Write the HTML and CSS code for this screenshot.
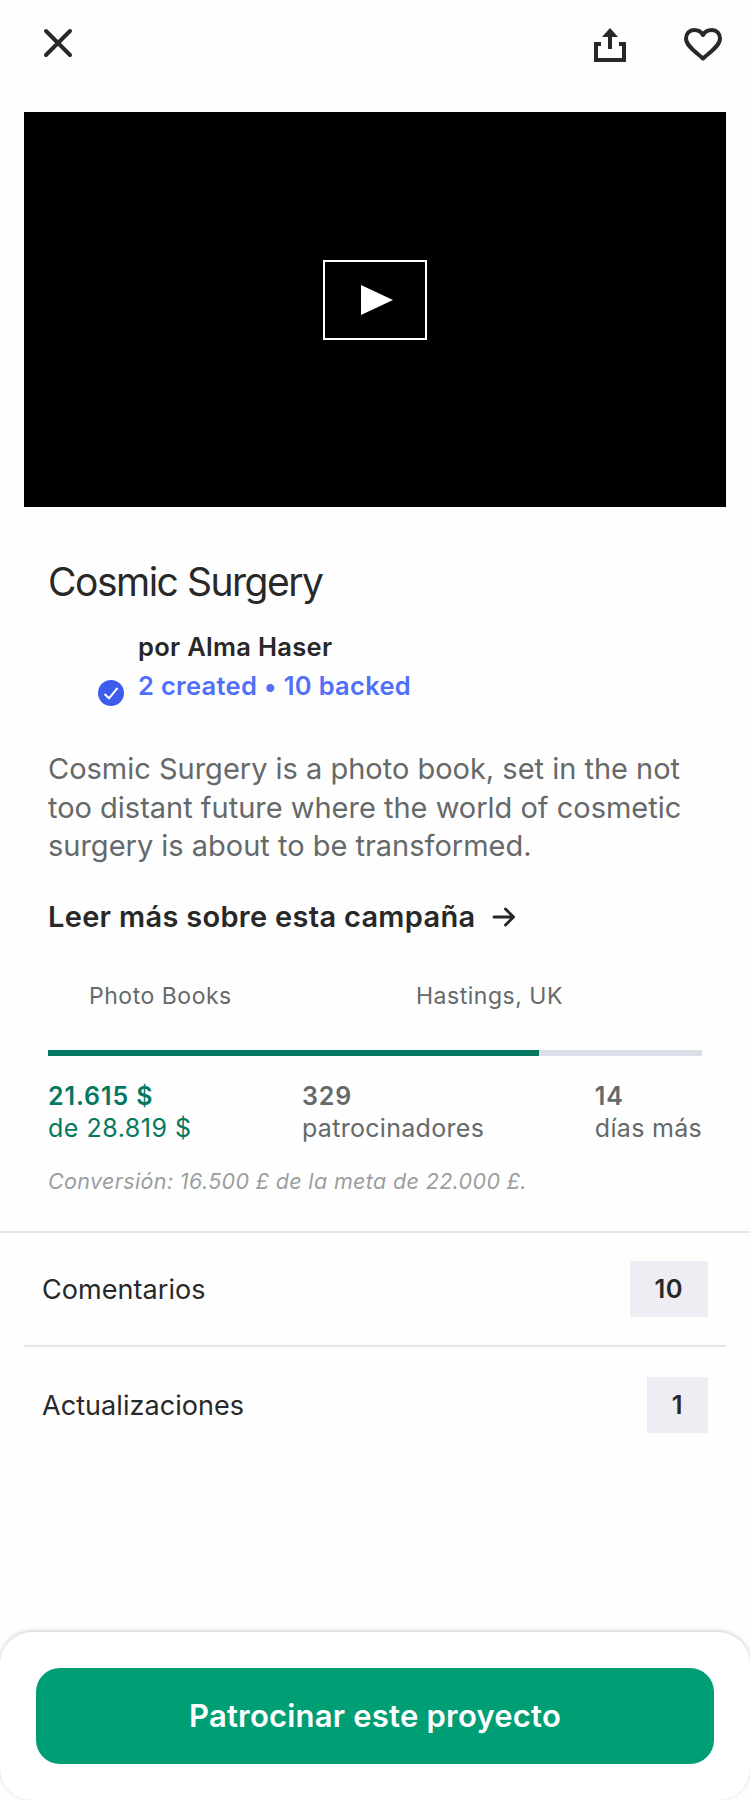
FILE: index.html
```html
<!DOCTYPE html>
<html lang="es">
<head>
<meta charset="utf-8">
<title>Cosmic Surgery</title>
<link rel="stylesheet" href="styles.css">
</head>
<body>
<div class="screen">
  <header class="topbar">
    <svg class="icon-close" width="32" height="32" viewBox="0 0 32 32" aria-label="Cerrar"><path d="M4 4 28 28M28 4 4 28"/></svg>
    <div class="actions">
      <svg class="icon-share" width="34" height="38" viewBox="0 0 34 38" aria-label="Compartir"><path class="tray" d="M8 18H3V34H31V18H26"/><path class="arrow" d="M17 2 25 11H19V23H15V11H9Z"/></svg>
      <svg class="icon-heart" width="40" height="36" viewBox="0 0 40 36" aria-label="Guardar"><path d="M20 32.500C14.500 27 3 20.500 3 12.500C3 7.500 6.500 4 11 4C15 4 18.500 6 20 9C21.500 6 25 4 29 4C33.500 4 37 7.500 37 12.500C37 20.500 25.500 27 20 32.500Z"/></svg>
    </div>
  </header>

  <div class="video">
    <div class="play"><svg width="32" height="30" viewBox="0 0 32 30"><path d="M0 0 32 15 0 30Z"/></svg></div>
  </div>

  <main class="project">
    <h1 class="title">Cosmic Surgery</h1>
    <div class="creator">
      <div class="avatar">
        <svg class="verified" width="26" height="26" viewBox="0 0 26 26"><circle cx="13" cy="13" r="13"/><path d="M6.500 14 11 18.300 19.500 8"/></svg>
      </div>
      <div class="creator-info">
        <div class="name">por Alma Haser</div>
        <div class="history">2 created • 10 backed</div>
      </div>
    </div>
    <p class="blurb">Cosmic Surgery is a photo book, set in the not<br>too distant future where the world of cosmetic<br>surgery is about to be transformed.</p>
    <a class="more"><span>Leer más sobre esta campaña</span><svg width="24" height="22" viewBox="0 0 24 22"><path d="M2 11H21M13.500 3 21.500 11 13.500 19"/></svg></a>
    <div class="tags"><span>Photo Books</span><span>Hastings, UK</span></div>
    <div class="progress"><div class="progress-fill" style="width:75%"></div></div>
    <div class="stats">
      <div class="stat pledged"><b>21.615 $</b><span>de 28.819 $</span></div>
      <div class="stat backers"><b>329</b><span>patrocinadores</span></div>
      <div class="stat days"><b>14</b><span>días más</span></div>
    </div>
    <p class="conversion">Conversión: 16.500 £ de la meta de 22.000 £.</p>
  </main>

  <nav class="links">
    <a class="row"><span>Comentarios</span><b class="count">10</b></a>
    <hr class="divider">
    <a class="row"><span>Actualizaciones</span><b class="count">1</b></a>
  </nav>

  <footer class="cta"><button class="pledge">Patrocinar este proyecto</button></footer>
</div>
</body>
</html>
```
FILE: styles.css
```css
* { box-sizing: border-box; }
body { margin: 0; background: #fefefe; color: #282828; font-family: Inter, "Liberation Sans", sans-serif; }
h1, p { margin: 0; font-weight: 400; }
b { font-weight: 600; }
svg { display: block; flex: none; }
.screen { display: flex; flex-direction: column; width: 750px; height: 1800px; overflow: hidden; white-space: nowrap; }

.topbar { display: flex; justify-content: space-between; align-items: flex-start; height: 112px; padding: 26px 27px 0 42px; }
.topbar svg { fill: none; stroke: #282828; stroke-width: 4; }
.icon-close { margin-top: 1px; stroke-linecap: round; }
.topbar .arrow { fill: #282828; stroke: none; }
.topbar .icon-heart { stroke-linejoin: round; }
.actions { display: flex; gap: 56px; }

.video { display: flex; align-items: center; justify-content: center; height: 395px; margin: 0 24px; padding-bottom: 19px; background: #000; }
.play { display: flex; align-items: center; height: 80px; width: 104px; padding-left: 36px; border: 2px solid #fff; }
.play svg { fill: #fff; }

.project { display: flex; flex-direction: column; height: 724px; padding: 51px 48px 0; }
.title { font-size: 39px; line-height: 48px; letter-spacing: -1.49px; }
.creator { display: flex; gap: 14px; height: 74px; margin-top: 26px; }
.avatar { display: flex; align-items: flex-end; justify-content: flex-end; width: 76px; }
.verified circle { fill: #3c5ceb; }
.verified path { fill: none; stroke: #fff; stroke-width: 2; }
.creator-info { display: flex; flex-direction: column; gap: 9px; font-size: 25.5px; line-height: 30px; font-weight: 600; letter-spacing: 0.3px; }
.history { color: #5070fa; }
.blurb { height: 115px; margin-top: 44px; font-size: 29px; line-height: 38.5px; letter-spacing: -0.01px; color: #656969; }
.more { display: flex; align-items: center; gap: 17px; height: 40px; margin-top: 31px; font-size: 29px; font-weight: 600; letter-spacing: 0.3px; }
.more svg { margin-top: 1px; fill: none; stroke: #282828; stroke-width: 3; stroke-linecap: round; stroke-linejoin: round; }
.tags { display: grid; grid-template-columns: 327px 1fr; margin-top: 45px; padding-left: 41px; font-size: 23px; line-height: 30px; letter-spacing: 0.52px; color: #656969; }
.progress { height: 6px; margin-top: 39px; background: #dcdee8; }
.progress-fill { height: 6px; background: #047860; }
.stats { display: flex; justify-content: space-between; margin-top: 24px; font-size: 25px; line-height: 32px; color: #656969; }
.stat { display: flex; flex-direction: column; letter-spacing: 0.3px; }
.stat b { letter-spacing: 0.9px; }
.pledged { width: 254px; color: #047860; letter-spacing: 0.52px; }
.backers { flex: 1; }
.conversion { margin-top: 22px; font-size: 21.5px; font-style: italic; line-height: 30px; letter-spacing: 0.36px; color: #9b9e9e; }

.links { border-top: 2px solid #e6e6e6; }
.row { display: flex; align-items: center; justify-content: space-between; height: 112px; padding: 0 42px; font-size: 27px; letter-spacing: 0.06px; }
.divider { height: 2px; margin: 0 24px; border: 0; background: #e6e6e6; }
.divider + .row { height: 116px; }
.count { height: 56px; padding: 0 25px; background: #eeedf3; font-size: 25.5px; line-height: 56px; letter-spacing: 0.4px; }

.cta { height: 168px; margin-top: auto; padding: 36px; border-radius: 32px; background: #fff; box-shadow: 0 -1px 4px rgba(0, 0, 0, 0.2); }
.pledge { display: block; width: 100%; height: 96px; padding: 0; border: 0; border-radius: 24px; background: #009e74; color: #fff; font: 600 31px/96px Inter, "Liberation Sans", sans-serif; letter-spacing: 0.21px; }
```
